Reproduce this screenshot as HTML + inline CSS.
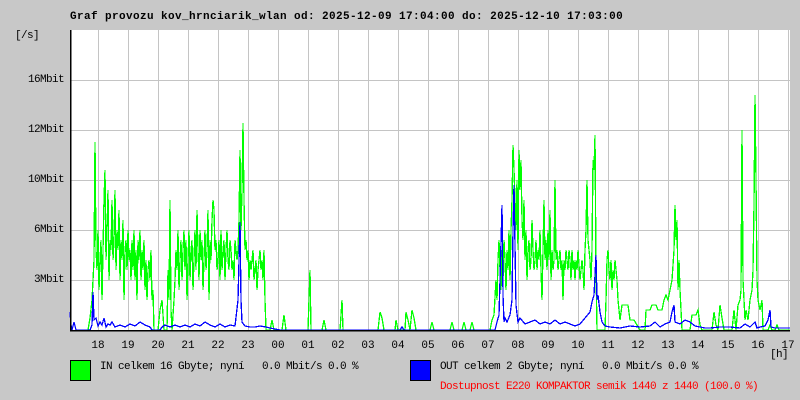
<!DOCTYPE html>
<html><head><meta charset="utf-8"><style>
html,body{margin:0;padding:0;background:#c8c8c8;}
body{width:800px;height:400px;position:relative;overflow:hidden;font-family:"Liberation Mono",monospace;font-size:11px;color:#000;}
.t{position:absolute;white-space:pre;}
.l{letter-spacing:-0.6px;}
.h{position:absolute;top:340px;width:30px;text-align:center;}
</style></head><body>
<svg width="800" height="400" style="position:absolute;left:0;top:0" shape-rendering="crispEdges">
<rect x="70" y="30" width="720" height="300" fill="#fff"/>
<g stroke="#c4c4c4" stroke-width="1">
<line x1="70" y1="80.5" x2="790" y2="80.5"/><line x1="70" y1="130.5" x2="790" y2="130.5"/>
<line x1="70" y1="180.5" x2="790" y2="180.5"/><line x1="70" y1="230.5" x2="790" y2="230.5"/>
<line x1="70" y1="280.5" x2="790" y2="280.5"/>
<line x1="98.5" y1="30" x2="98.5" y2="330"/><line x1="128.5" y1="30" x2="128.5" y2="330"/><line x1="158.5" y1="30" x2="158.5" y2="330"/><line x1="188.5" y1="30" x2="188.5" y2="330"/><line x1="218.5" y1="30" x2="218.5" y2="330"/><line x1="248.5" y1="30" x2="248.5" y2="330"/><line x1="278.5" y1="30" x2="278.5" y2="330"/><line x1="308.5" y1="30" x2="308.5" y2="330"/><line x1="338.5" y1="30" x2="338.5" y2="330"/><line x1="368.5" y1="30" x2="368.5" y2="330"/><line x1="398.5" y1="30" x2="398.5" y2="330"/><line x1="428.5" y1="30" x2="428.5" y2="330"/><line x1="458.5" y1="30" x2="458.5" y2="330"/><line x1="488.5" y1="30" x2="488.5" y2="330"/><line x1="518.5" y1="30" x2="518.5" y2="330"/><line x1="548.5" y1="30" x2="548.5" y2="330"/><line x1="578.5" y1="30" x2="578.5" y2="330"/><line x1="608.5" y1="30" x2="608.5" y2="330"/><line x1="638.5" y1="30" x2="638.5" y2="330"/><line x1="668.5" y1="30" x2="668.5" y2="330"/><line x1="698.5" y1="30" x2="698.5" y2="330"/><line x1="728.5" y1="30" x2="728.5" y2="330"/><line x1="758.5" y1="30" x2="758.5" y2="330"/><line x1="788.5" y1="30" x2="788.5" y2="330"/>
</g>
<polyline fill="none" stroke="#00ff00" stroke-width="1.3" points="88,330 90,318 92,300 93,280 94,260 95,142 96,250 97,270 98,230 99,290 100,260 101,240 102,300 103,250 104,200 105,170 106,260 107,230 108,190 109,280 110,240 111,250 112,200 113,260 114,240 115,190 116,270 117,230 118,250 119,210 120,280 121,240 122,260 123,220 124,300 125,250 126,240 127,270 128,230 129,260 130,250 131,280 132,240 133,270 134,230 135,280 136,250 137,300 138,240 139,260 140,230 141,280 142,250 143,270 144,240 145,290 146,260 147,300 148,270 149,260 150,280 151,250 152,300 153,290 154,330 158,330 160,310 162,300 164,330 167,330 168,270 169,300 170,200 171,310 172,330 174,300 175,280 176,250 177,270 178,230 179,290 180,260 181,240 182,280 183,250 184,230 185,270 186,240 187,300 188,260 189,230 190,280 191,250 192,240 193,290 194,260 195,230 196,270 197,210 198,250 199,280 200,230 201,260 202,240 203,290 204,260 205,230 206,270 207,250 208,210 209,300 210,240 211,260 212,220 213,200 214,210 215,250 216,240 217,270 218,260 219,240 220,280 221,230 222,270 223,250 224,240 225,280 226,250 227,230 228,260 229,270 230,240 231,250 232,270 233,260 234,280 235,240 236,250 237,260 238,250 239,220 240,150 241,230 242,190 243,123 244,200 245,250 246,240 247,260 248,250 249,280 250,260 251,270 252,260 253,250 254,280 255,270 256,260 257,290 258,270 259,260 260,250 261,270 262,260 263,280 264,250 265,300 266,330 270,330 272,320 274,330 282,330 284,315 286,330 308,330 310,270 311,330 322,330 324,320 326,330 340,330 342,300 343,330 378,330 380,312 382,318 384,330 395,330 396,320 398,330 405,330 406,312 408,320 410,330 412,310 414,318 416,330 430,330 432,322 434,330 450,330 452,322 454,330 462,330 464,322 466,330 470,330 472,322 474,330 490,330 492,320 494,315 496,280 497,300 498,260 499,240 500,270 501,290 502,250 503,280 504,240 505,260 506,290 507,250 508,270 509,230 510,280 511,230 512,200 513,145 514,170 515,200 516,230 517,180 518,250 519,150 520,190 521,160 522,220 523,240 524,200 525,260 526,230 527,280 528,250 529,240 530,270 531,260 532,220 533,250 534,270 535,260 536,240 537,270 538,250 539,260 540,230 541,270 542,300 543,250 544,200 545,260 546,240 547,270 548,230 549,260 550,210 551,280 552,250 553,270 554,260 555,180 556,260 557,250 558,270 559,260 560,250 561,270 562,260 563,300 564,260 565,270 566,250 567,260 568,270 569,250 570,260 571,280 572,250 573,270 574,260 575,280 576,260 577,270 578,250 579,265 580,280 581,270 582,260 583,270 584,290 585,250 586,230 587,180 588,240 589,250 590,260 591,280 592,250 593,160 594,170 595,135 596,270 597,330 605,330 606,300 607,260 608,250 609,270 610,280 611,260 612,290 613,270 614,280 615,260 616,270 617,280 618,300 619,310 620,320 622,305 625,305 628,305 630,320 634,320 640,330 645,330 646,310 650,310 652,305 656,305 658,310 662,310 664,300 666,295 668,300 670,290 672,280 674,250 675,205 676,240 677,220 678,290 679,260 680,290 681,310 682,330 690,330 692,315 696,315 698,310 700,325 702,330 712,330 714,312 716,325 718,330 720,305 722,318 724,330 730,330 732,330 734,310 736,330 738,305 740,300 741,290 742,130 743,280 744,300 745,320 746,310 748,320 750,300 752,290 753,270 754,205 755,95 756,180 757,280 758,300 760,310 762,300 763,330 768,330 770,325 772,330 775,330 777,325 779,330 790,330"/>
<polyline fill="none" stroke="#0000ff" stroke-width="1.3" points="70,312 71,325 72,330 74,322 76,330 90,330 92,325 93,292 94,320 96,318 98,326 100,322 102,325 104,318 106,327 108,324 110,325 112,322 115,327 120,325 125,327 130,324 135,326 140,322 145,325 150,327 152,330 160,330 162,327 165,325 170,327 175,325 180,327 185,325 190,327 195,324 200,326 205,322 210,325 215,327 220,324 225,327 230,325 235,326 238,300 240,222 241,300 242,322 245,326 250,327 255,327 260,326 266,327 270,328 280,330 400,330 402,327 404,330 495,330 497,322 499,315 500,280 502,205 503,295 504,322 505,318 507,322 510,315 512,300 513,230 514,185 515,245 516,305 518,322 520,318 525,324 530,322 535,320 540,324 545,322 550,324 555,320 560,324 565,322 570,324 575,326 580,324 585,318 590,312 592,302 594,295 596,255 597,300 598,295 600,312 602,322 605,326 610,327 620,328 630,326 640,327 650,326 655,322 660,327 665,324 670,322 672,312 674,305 675,322 680,324 685,320 690,322 695,326 700,327 705,328 710,328 720,327 730,327 740,328 745,324 750,327 755,322 757,328 760,327 765,326 768,320 770,310 771,327 775,328 790,328"/>
<line x1="70.5" y1="30" x2="70.5" y2="331" stroke="#000" stroke-width="1.5"/>
<line x1="70" y1="330.5" x2="790" y2="330.5" stroke="#000" stroke-width="1.5"/>
<rect x="70.5" y="360.5" width="20" height="20" fill="#00ff00" stroke="#000"/>
<rect x="410.5" y="360.5" width="20" height="20" fill="#0000ff" stroke="#000"/>
</svg>
<div class="t" style="left:70px;top:11px;font-weight:bold;letter-spacing:0.4px;">Graf provozu kov_hrnciarik_wlan od: 2025-12-09 17:04:00 do: 2025-12-10 17:03:00</div>
<div class="t l" style="left:15px;top:30px;">[/s]</div>
<div class="t l" style="right:736px;top:74px;">16Mbit</div>
<div class="t l" style="right:736px;top:124px;">12Mbit</div>
<div class="t l" style="right:736px;top:174px;">10Mbit</div>
<div class="t l" style="right:736px;top:224px;">6Mbit</div>
<div class="t l" style="right:736px;top:274px;">3Mbit</div>
<div class="h" style="left:83px">18</div><div class="h" style="left:113px">19</div><div class="h" style="left:143px">20</div><div class="h" style="left:173px">21</div><div class="h" style="left:203px">22</div><div class="h" style="left:233px">23</div><div class="h" style="left:263px">00</div><div class="h" style="left:293px">01</div><div class="h" style="left:323px">02</div><div class="h" style="left:353px">03</div><div class="h" style="left:383px">04</div><div class="h" style="left:413px">05</div><div class="h" style="left:443px">06</div><div class="h" style="left:473px">07</div><div class="h" style="left:503px">08</div><div class="h" style="left:533px">09</div><div class="h" style="left:563px">10</div><div class="h" style="left:593px">11</div><div class="h" style="left:623px">12</div><div class="h" style="left:653px">13</div><div class="h" style="left:683px">14</div><div class="h" style="left:713px">15</div><div class="h" style="left:743px">16</div><div class="h" style="left:773px">17</div>
<div class="t l" style="left:770px;top:349px;">[h]</div>
<div class="t l" style="left:100px;top:361px;">IN celkem 16 Gbyte; nyní   0.0 Mbit/s 0.0 %</div>
<div class="t l" style="left:440px;top:361px;">OUT celkem 2 Gbyte; nyní   0.0 Mbit/s 0.0 %</div>
<div class="t l" style="left:440px;top:381px;color:#ff0000;">Dostupnost E220 KOMPAKTOR semik 1440 z 1440 (100.0 %)</div>
</body></html>
